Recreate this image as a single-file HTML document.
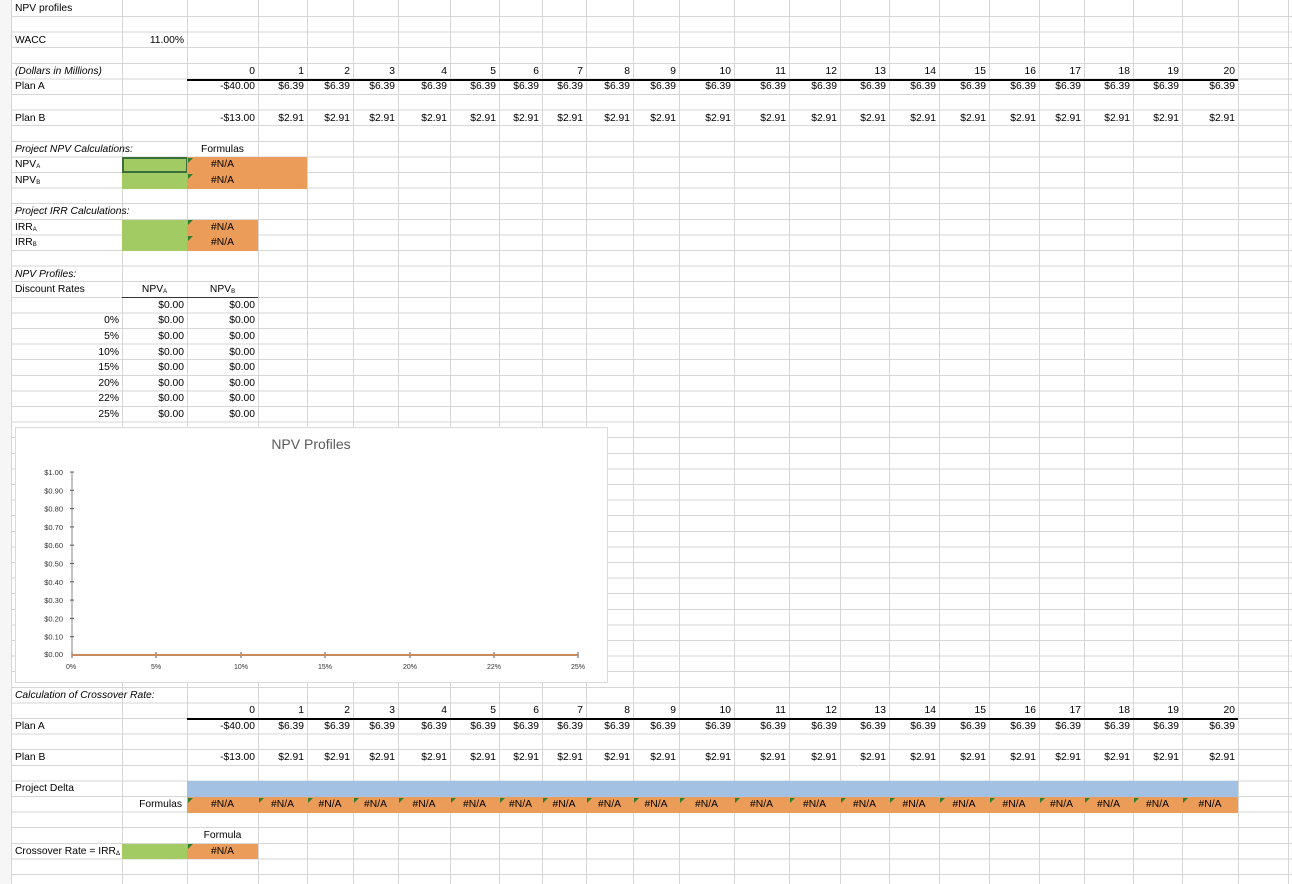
<!DOCTYPE html>
<html><head><meta charset="utf-8"><style>
*{margin:0;padding:0;box-sizing:border-box}
body{width:1292px;height:884px;overflow:hidden;background:#fff;font-family:"Liberation Sans",Arial,sans-serif;font-size:10.3px;color:#000;position:relative}
#grid{position:absolute;left:0;top:0;width:1292px;height:884px;
background-image:linear-gradient(#d6d6d6,#d6d6d6),repeating-linear-gradient(to bottom,transparent 0,transparent 14.6px,#d6d6d6 14.6px,#d6d6d6 15.6px);
background-size:1292px 1px,1292px 867px;background-position:0 16px,0 17px;background-repeat:no-repeat}
.v{position:absolute;top:0;width:1px;height:884px;background:#d6d6d6}
.c{position:absolute;height:15.6px;line-height:15.6px;white-space:nowrap;padding:0 3px;overflow:visible}
.r{text-align:right}.m{text-align:center}.i{font-style:italic}
.bg{position:absolute;height:15.6px}
.g{background:#a2cc63}.o{background:#eb9c58}.b{background:#a3c1e3}
.t{position:absolute;width:0;height:0;border-top:5px solid #2e7d32;border-right:5px solid transparent}
sub{font-size:6px;vertical-align:baseline;position:relative;top:1px}
.line{position:absolute;height:2px;background:#000}
</style></head><body>
<div id="grid"></div>
<div style="position:absolute;left:0;top:0;width:12px;height:884px;background:#f6f6f6;border-right:1px solid #d6d6d6"></div>
<div class="v" style="left:122px"></div><div class="v" style="left:187px"></div><div class="v" style="left:258px"></div><div class="v" style="left:307px"></div><div class="v" style="left:353px"></div><div class="v" style="left:398px"></div><div class="v" style="left:450px"></div><div class="v" style="left:499px"></div><div class="v" style="left:542px"></div><div class="v" style="left:586px"></div><div class="v" style="left:633px"></div><div class="v" style="left:679px"></div><div class="v" style="left:734px"></div><div class="v" style="left:789px"></div><div class="v" style="left:840px"></div><div class="v" style="left:889px"></div><div class="v" style="left:939px"></div><div class="v" style="left:989px"></div><div class="v" style="left:1039px"></div><div class="v" style="left:1084px"></div><div class="v" style="left:1133px"></div><div class="v" style="left:1182px"></div><div class="v" style="left:1238px"></div><div class="v" style="left:1288px"></div>

<!-- fills -->
<div class="bg g" style="left:122px;width:65px;top:157.4px;height:31.2px"></div>
<div style="position:absolute;left:122px;top:157px;width:66px;height:16px;border:2px solid #3a6e3a"></div>
<div class="bg o" style="left:187px;width:120px;top:157.4px;height:31.2px"></div>
<div class="bg g" style="left:122px;width:65px;top:219.8px;height:31.2px"></div>
<div class="bg o" style="left:187px;width:71px;top:219.8px;height:31.2px"></div>
<div class="bg b" style="left:187px;width:1051px;top:781.4px"></div>
<div class="bg o" style="left:187px;width:1051px;top:797px"></div>
<div class="bg g" style="left:122px;width:65px;top:843.8px"></div>
<div class="bg o" style="left:187px;width:71px;top:843.8px"></div>
<div class="t" style="left:188px;top:158px"></div><div class="t" style="left:188px;top:174px"></div>
<div class="t" style="left:188px;top:220px"></div><div class="t" style="left:188px;top:236px"></div>
<div class="t" style="left:188px;top:844px"></div>

<div class="line" style="left:187px;width:1051px;top:78.5px"></div>
<div class="line" style="left:187px;width:1051px;top:718px"></div>
<div style="position:absolute;left:122px;width:136px;top:297px;height:1px;background:#333"></div>

<!-- text -->
<div class="c" style="left:12px;top:0;height:17px;line-height:17px">NPV profiles</div>
<div class="c" style="left:12px;top:32.6px">WACC</div>
<div class="c r" style="left:122px;width:65px;top:32.6px">11.00%</div>
<div class="c i" style="left:12px;top:63.8px">(Dollars in Millions)</div>
<div class="c" style="left:12px;top:79.4px">Plan A</div>
<div class="c" style="left:12px;top:110.6px">Plan B</div>
<div class="c i" style="left:12px;top:141.8px">Project NPV Calculations:</div>
<div class="c m" style="left:187px;width:71px;top:141.8px">Formulas</div>
<div class="c" style="left:12px;top:157.4px">NPV<sub>A</sub></div>
<div class="c" style="left:12px;top:173px">NPV<sub>B</sub></div>
<div class="c m" style="left:187px;width:71px;top:157.4px">#N/A</div>
<div class="c m" style="left:187px;width:71px;top:173px">#N/A</div>
<div class="c i" style="left:12px;top:204.2px">Project IRR Calculations:</div>
<div class="c" style="left:12px;top:219.8px">IRR<sub>A</sub></div>
<div class="c" style="left:12px;top:235.4px">IRR<sub>B</sub></div>
<div class="c m" style="left:187px;width:71px;top:219.8px">#N/A</div>
<div class="c m" style="left:187px;width:71px;top:235.4px">#N/A</div>
<div class="c i" style="left:12px;top:266.6px">NPV Profiles:</div>
<div class="c" style="left:12px;top:282.2px">Discount Rates</div>
<div class="c m" style="left:122px;width:65px;top:282.2px">NPV<sub>A</sub></div>
<div class="c m" style="left:187px;width:71px;top:282.2px">NPV<sub>B</sub></div>
<div class="c r" style="left:122px;width:65px;top:297.8px">$0.00</div><div class="c r" style="left:187px;width:71px;top:297.8px">$0.00</div>
<div class="c r" style="left:12px;width:110px;top:313.4px">0%</div><div class="c r" style="left:122px;width:65px;top:313.4px">$0.00</div><div class="c r" style="left:187px;width:71px;top:313.4px">$0.00</div>
<div class="c r" style="left:12px;width:110px;top:329px">5%</div><div class="c r" style="left:122px;width:65px;top:329px">$0.00</div><div class="c r" style="left:187px;width:71px;top:329px">$0.00</div>
<div class="c r" style="left:12px;width:110px;top:344.6px">10%</div><div class="c r" style="left:122px;width:65px;top:344.6px">$0.00</div><div class="c r" style="left:187px;width:71px;top:344.6px">$0.00</div>
<div class="c r" style="left:12px;width:110px;top:360.2px">15%</div><div class="c r" style="left:122px;width:65px;top:360.2px">$0.00</div><div class="c r" style="left:187px;width:71px;top:360.2px">$0.00</div>
<div class="c r" style="left:12px;width:110px;top:375.8px">20%</div><div class="c r" style="left:122px;width:65px;top:375.8px">$0.00</div><div class="c r" style="left:187px;width:71px;top:375.8px">$0.00</div>
<div class="c r" style="left:12px;width:110px;top:391.4px">22%</div><div class="c r" style="left:122px;width:65px;top:391.4px">$0.00</div><div class="c r" style="left:187px;width:71px;top:391.4px">$0.00</div>
<div class="c r" style="left:12px;width:110px;top:407px">25%</div><div class="c r" style="left:122px;width:65px;top:407px">$0.00</div><div class="c r" style="left:187px;width:71px;top:407px">$0.00</div>

<!-- cash flow tables -->
<div style="position:absolute;left:0;top:63.8px">
<div class="c r" style="left:187px;width:71px;top:0">0</div><div class="c r" style="left:187px;width:71px;top:15.6px">-$40.00</div><div class="c r" style="left:187px;width:71px;top:46.8px">-$13.00</div>
<div class="c r" style="left:258px;width:49px;top:0">1</div><div class="c r" style="left:258px;width:49px;top:15.6px">$6.39</div><div class="c r" style="left:258px;width:49px;top:46.8px">$2.91</div>
<div class="c r" style="left:307px;width:46px;top:0">2</div><div class="c r" style="left:307px;width:46px;top:15.6px">$6.39</div><div class="c r" style="left:307px;width:46px;top:46.8px">$2.91</div>
<div class="c r" style="left:353px;width:45px;top:0">3</div><div class="c r" style="left:353px;width:45px;top:15.6px">$6.39</div><div class="c r" style="left:353px;width:45px;top:46.8px">$2.91</div>
<div class="c r" style="left:398px;width:52px;top:0">4</div><div class="c r" style="left:398px;width:52px;top:15.6px">$6.39</div><div class="c r" style="left:398px;width:52px;top:46.8px">$2.91</div>
<div class="c r" style="left:450px;width:49px;top:0">5</div><div class="c r" style="left:450px;width:49px;top:15.6px">$6.39</div><div class="c r" style="left:450px;width:49px;top:46.8px">$2.91</div>
<div class="c r" style="left:499px;width:43px;top:0">6</div><div class="c r" style="left:499px;width:43px;top:15.6px">$6.39</div><div class="c r" style="left:499px;width:43px;top:46.8px">$2.91</div>
<div class="c r" style="left:542px;width:44px;top:0">7</div><div class="c r" style="left:542px;width:44px;top:15.6px">$6.39</div><div class="c r" style="left:542px;width:44px;top:46.8px">$2.91</div>
<div class="c r" style="left:586px;width:47px;top:0">8</div><div class="c r" style="left:586px;width:47px;top:15.6px">$6.39</div><div class="c r" style="left:586px;width:47px;top:46.8px">$2.91</div>
<div class="c r" style="left:633px;width:46px;top:0">9</div><div class="c r" style="left:633px;width:46px;top:15.6px">$6.39</div><div class="c r" style="left:633px;width:46px;top:46.8px">$2.91</div>
<div class="c r" style="left:679px;width:55px;top:0">10</div><div class="c r" style="left:679px;width:55px;top:15.6px">$6.39</div><div class="c r" style="left:679px;width:55px;top:46.8px">$2.91</div>
<div class="c r" style="left:734px;width:55px;top:0">11</div><div class="c r" style="left:734px;width:55px;top:15.6px">$6.39</div><div class="c r" style="left:734px;width:55px;top:46.8px">$2.91</div>
<div class="c r" style="left:789px;width:51px;top:0">12</div><div class="c r" style="left:789px;width:51px;top:15.6px">$6.39</div><div class="c r" style="left:789px;width:51px;top:46.8px">$2.91</div>
<div class="c r" style="left:840px;width:49px;top:0">13</div><div class="c r" style="left:840px;width:49px;top:15.6px">$6.39</div><div class="c r" style="left:840px;width:49px;top:46.8px">$2.91</div>
<div class="c r" style="left:889px;width:50px;top:0">14</div><div class="c r" style="left:889px;width:50px;top:15.6px">$6.39</div><div class="c r" style="left:889px;width:50px;top:46.8px">$2.91</div>
<div class="c r" style="left:939px;width:50px;top:0">15</div><div class="c r" style="left:939px;width:50px;top:15.6px">$6.39</div><div class="c r" style="left:939px;width:50px;top:46.8px">$2.91</div>
<div class="c r" style="left:989px;width:50px;top:0">16</div><div class="c r" style="left:989px;width:50px;top:15.6px">$6.39</div><div class="c r" style="left:989px;width:50px;top:46.8px">$2.91</div>
<div class="c r" style="left:1039px;width:45px;top:0">17</div><div class="c r" style="left:1039px;width:45px;top:15.6px">$6.39</div><div class="c r" style="left:1039px;width:45px;top:46.8px">$2.91</div>
<div class="c r" style="left:1084px;width:49px;top:0">18</div><div class="c r" style="left:1084px;width:49px;top:15.6px">$6.39</div><div class="c r" style="left:1084px;width:49px;top:46.8px">$2.91</div>
<div class="c r" style="left:1133px;width:49px;top:0">19</div><div class="c r" style="left:1133px;width:49px;top:15.6px">$6.39</div><div class="c r" style="left:1133px;width:49px;top:46.8px">$2.91</div>
<div class="c r" style="left:1182px;width:56px;top:0">20</div><div class="c r" style="left:1182px;width:56px;top:15.6px">$6.39</div><div class="c r" style="left:1182px;width:56px;top:46.8px">$2.91</div>
</div>
<div style="position:absolute;left:0;top:703.4px">
<div class="c r" style="left:187px;width:71px;top:0">0</div><div class="c r" style="left:187px;width:71px;top:15.6px">-$40.00</div><div class="c r" style="left:187px;width:71px;top:46.8px">-$13.00</div>
<div class="c r" style="left:258px;width:49px;top:0">1</div><div class="c r" style="left:258px;width:49px;top:15.6px">$6.39</div><div class="c r" style="left:258px;width:49px;top:46.8px">$2.91</div>
<div class="c r" style="left:307px;width:46px;top:0">2</div><div class="c r" style="left:307px;width:46px;top:15.6px">$6.39</div><div class="c r" style="left:307px;width:46px;top:46.8px">$2.91</div>
<div class="c r" style="left:353px;width:45px;top:0">3</div><div class="c r" style="left:353px;width:45px;top:15.6px">$6.39</div><div class="c r" style="left:353px;width:45px;top:46.8px">$2.91</div>
<div class="c r" style="left:398px;width:52px;top:0">4</div><div class="c r" style="left:398px;width:52px;top:15.6px">$6.39</div><div class="c r" style="left:398px;width:52px;top:46.8px">$2.91</div>
<div class="c r" style="left:450px;width:49px;top:0">5</div><div class="c r" style="left:450px;width:49px;top:15.6px">$6.39</div><div class="c r" style="left:450px;width:49px;top:46.8px">$2.91</div>
<div class="c r" style="left:499px;width:43px;top:0">6</div><div class="c r" style="left:499px;width:43px;top:15.6px">$6.39</div><div class="c r" style="left:499px;width:43px;top:46.8px">$2.91</div>
<div class="c r" style="left:542px;width:44px;top:0">7</div><div class="c r" style="left:542px;width:44px;top:15.6px">$6.39</div><div class="c r" style="left:542px;width:44px;top:46.8px">$2.91</div>
<div class="c r" style="left:586px;width:47px;top:0">8</div><div class="c r" style="left:586px;width:47px;top:15.6px">$6.39</div><div class="c r" style="left:586px;width:47px;top:46.8px">$2.91</div>
<div class="c r" style="left:633px;width:46px;top:0">9</div><div class="c r" style="left:633px;width:46px;top:15.6px">$6.39</div><div class="c r" style="left:633px;width:46px;top:46.8px">$2.91</div>
<div class="c r" style="left:679px;width:55px;top:0">10</div><div class="c r" style="left:679px;width:55px;top:15.6px">$6.39</div><div class="c r" style="left:679px;width:55px;top:46.8px">$2.91</div>
<div class="c r" style="left:734px;width:55px;top:0">11</div><div class="c r" style="left:734px;width:55px;top:15.6px">$6.39</div><div class="c r" style="left:734px;width:55px;top:46.8px">$2.91</div>
<div class="c r" style="left:789px;width:51px;top:0">12</div><div class="c r" style="left:789px;width:51px;top:15.6px">$6.39</div><div class="c r" style="left:789px;width:51px;top:46.8px">$2.91</div>
<div class="c r" style="left:840px;width:49px;top:0">13</div><div class="c r" style="left:840px;width:49px;top:15.6px">$6.39</div><div class="c r" style="left:840px;width:49px;top:46.8px">$2.91</div>
<div class="c r" style="left:889px;width:50px;top:0">14</div><div class="c r" style="left:889px;width:50px;top:15.6px">$6.39</div><div class="c r" style="left:889px;width:50px;top:46.8px">$2.91</div>
<div class="c r" style="left:939px;width:50px;top:0">15</div><div class="c r" style="left:939px;width:50px;top:15.6px">$6.39</div><div class="c r" style="left:939px;width:50px;top:46.8px">$2.91</div>
<div class="c r" style="left:989px;width:50px;top:0">16</div><div class="c r" style="left:989px;width:50px;top:15.6px">$6.39</div><div class="c r" style="left:989px;width:50px;top:46.8px">$2.91</div>
<div class="c r" style="left:1039px;width:45px;top:0">17</div><div class="c r" style="left:1039px;width:45px;top:15.6px">$6.39</div><div class="c r" style="left:1039px;width:45px;top:46.8px">$2.91</div>
<div class="c r" style="left:1084px;width:49px;top:0">18</div><div class="c r" style="left:1084px;width:49px;top:15.6px">$6.39</div><div class="c r" style="left:1084px;width:49px;top:46.8px">$2.91</div>
<div class="c r" style="left:1133px;width:49px;top:0">19</div><div class="c r" style="left:1133px;width:49px;top:15.6px">$6.39</div><div class="c r" style="left:1133px;width:49px;top:46.8px">$2.91</div>
<div class="c r" style="left:1182px;width:56px;top:0">20</div><div class="c r" style="left:1182px;width:56px;top:15.6px">$6.39</div><div class="c r" style="left:1182px;width:56px;top:46.8px">$2.91</div>
</div>

<div class="c i" style="left:12px;top:687.8px">Calculation of Crossover Rate:</div>
<div class="c" style="left:12px;top:719px">Plan A</div>
<div class="c" style="left:12px;top:750.2px">Plan B</div>
<div class="c" style="left:12px;top:781.4px">Project Delta</div>
<div class="c r" style="left:122px;width:63px;top:797px">Formulas</div>

<div style="position:absolute;left:0;top:797px">
<div class="t" style="left:188px;top:1px"></div><div class="c m" style="left:187px;width:71px">#N/A</div>
<div class="t" style="left:259px;top:1px"></div><div class="c m" style="left:258px;width:49px">#N/A</div>
<div class="t" style="left:308px;top:1px"></div><div class="c m" style="left:307px;width:46px">#N/A</div>
<div class="t" style="left:354px;top:1px"></div><div class="c m" style="left:353px;width:45px">#N/A</div>
<div class="t" style="left:399px;top:1px"></div><div class="c m" style="left:398px;width:52px">#N/A</div>
<div class="t" style="left:451px;top:1px"></div><div class="c m" style="left:450px;width:49px">#N/A</div>
<div class="t" style="left:500px;top:1px"></div><div class="c m" style="left:499px;width:43px">#N/A</div>
<div class="t" style="left:543px;top:1px"></div><div class="c m" style="left:542px;width:44px">#N/A</div>
<div class="t" style="left:587px;top:1px"></div><div class="c m" style="left:586px;width:47px">#N/A</div>
<div class="t" style="left:634px;top:1px"></div><div class="c m" style="left:633px;width:46px">#N/A</div>
<div class="t" style="left:680px;top:1px"></div><div class="c m" style="left:679px;width:55px">#N/A</div>
<div class="t" style="left:735px;top:1px"></div><div class="c m" style="left:734px;width:55px">#N/A</div>
<div class="t" style="left:790px;top:1px"></div><div class="c m" style="left:789px;width:51px">#N/A</div>
<div class="t" style="left:841px;top:1px"></div><div class="c m" style="left:840px;width:49px">#N/A</div>
<div class="t" style="left:890px;top:1px"></div><div class="c m" style="left:889px;width:50px">#N/A</div>
<div class="t" style="left:940px;top:1px"></div><div class="c m" style="left:939px;width:50px">#N/A</div>
<div class="t" style="left:990px;top:1px"></div><div class="c m" style="left:989px;width:50px">#N/A</div>
<div class="t" style="left:1040px;top:1px"></div><div class="c m" style="left:1039px;width:45px">#N/A</div>
<div class="t" style="left:1085px;top:1px"></div><div class="c m" style="left:1084px;width:49px">#N/A</div>
<div class="t" style="left:1134px;top:1px"></div><div class="c m" style="left:1133px;width:49px">#N/A</div>
<div class="t" style="left:1183px;top:1px"></div><div class="c m" style="left:1182px;width:56px">#N/A</div>
</div>

<div class="c m" style="left:187px;width:71px;top:828.2px">Formula</div>
<div class="c" style="left:12px;top:843.8px">Crossover Rate = IRR<sub>Δ</sub></div>
<div class="c m" style="left:187px;width:71px;top:843.8px">#N/A</div>

<!-- chart -->
<div style="position:absolute;left:15px;top:427px;width:593px;height:256px;background:#fff;border:1px solid #d9d9d9"></div>
<svg style="position:absolute;left:0;top:0" width="1292" height="884" font-family="Liberation Sans, Arial, sans-serif">
<text x="311" y="449" font-size="14" fill="#595959" text-anchor="middle">NPV Profiles</text>
<g font-size="7.5" fill="#333" text-anchor="end">
<text x="63" y="475">$1.00</text><text x="63" y="493.3">$0.90</text><text x="63" y="511.6">$0.80</text><text x="63" y="529.9">$0.70</text><text x="63" y="548.2">$0.60</text><text x="63" y="566.5">$0.50</text><text x="63" y="584.8">$0.40</text><text x="63" y="603.1">$0.30</text><text x="63" y="621.4">$0.20</text><text x="63" y="639.7">$0.10</text><text x="63" y="657">$0.00</text>
</g>
<line x1="72" y1="472" x2="72" y2="655" stroke="#888" stroke-width="1"/>
<g stroke="#555" stroke-width="1">
<line x1="70" y1="472" x2="74" y2="472"/><line x1="70" y1="490.3" x2="74" y2="490.3"/><line x1="70" y1="508.6" x2="74" y2="508.6"/><line x1="70" y1="526.9" x2="74" y2="526.9"/><line x1="70" y1="545.2" x2="74" y2="545.2"/><line x1="70" y1="563.5" x2="74" y2="563.5"/><line x1="70" y1="581.8" x2="74" y2="581.8"/><line x1="70" y1="600.1" x2="74" y2="600.1"/><line x1="70" y1="618.4" x2="74" y2="618.4"/><line x1="70" y1="636.7" x2="74" y2="636.7"/>
<line x1="72" y1="652" x2="72" y2="658"/><line x1="156" y1="652" x2="156" y2="658"/><line x1="241" y1="652" x2="241" y2="658"/><line x1="325" y1="652" x2="325" y2="658"/><line x1="410" y1="652" x2="410" y2="658"/><line x1="494" y1="652" x2="494" y2="658"/><line x1="578" y1="652" x2="578" y2="658"/>
</g>
<line x1="72" y1="655" x2="578" y2="655" stroke="#c98a62" stroke-width="2"/>
<g font-size="7" fill="#333" text-anchor="middle">
<text x="71" y="669">0%</text><text x="156" y="669">5%</text><text x="241" y="669">10%</text><text x="325" y="669">15%</text><text x="410" y="669">20%</text><text x="494" y="669">22%</text><text x="578" y="669">25%</text>
</g>
</svg>
</body></html>
